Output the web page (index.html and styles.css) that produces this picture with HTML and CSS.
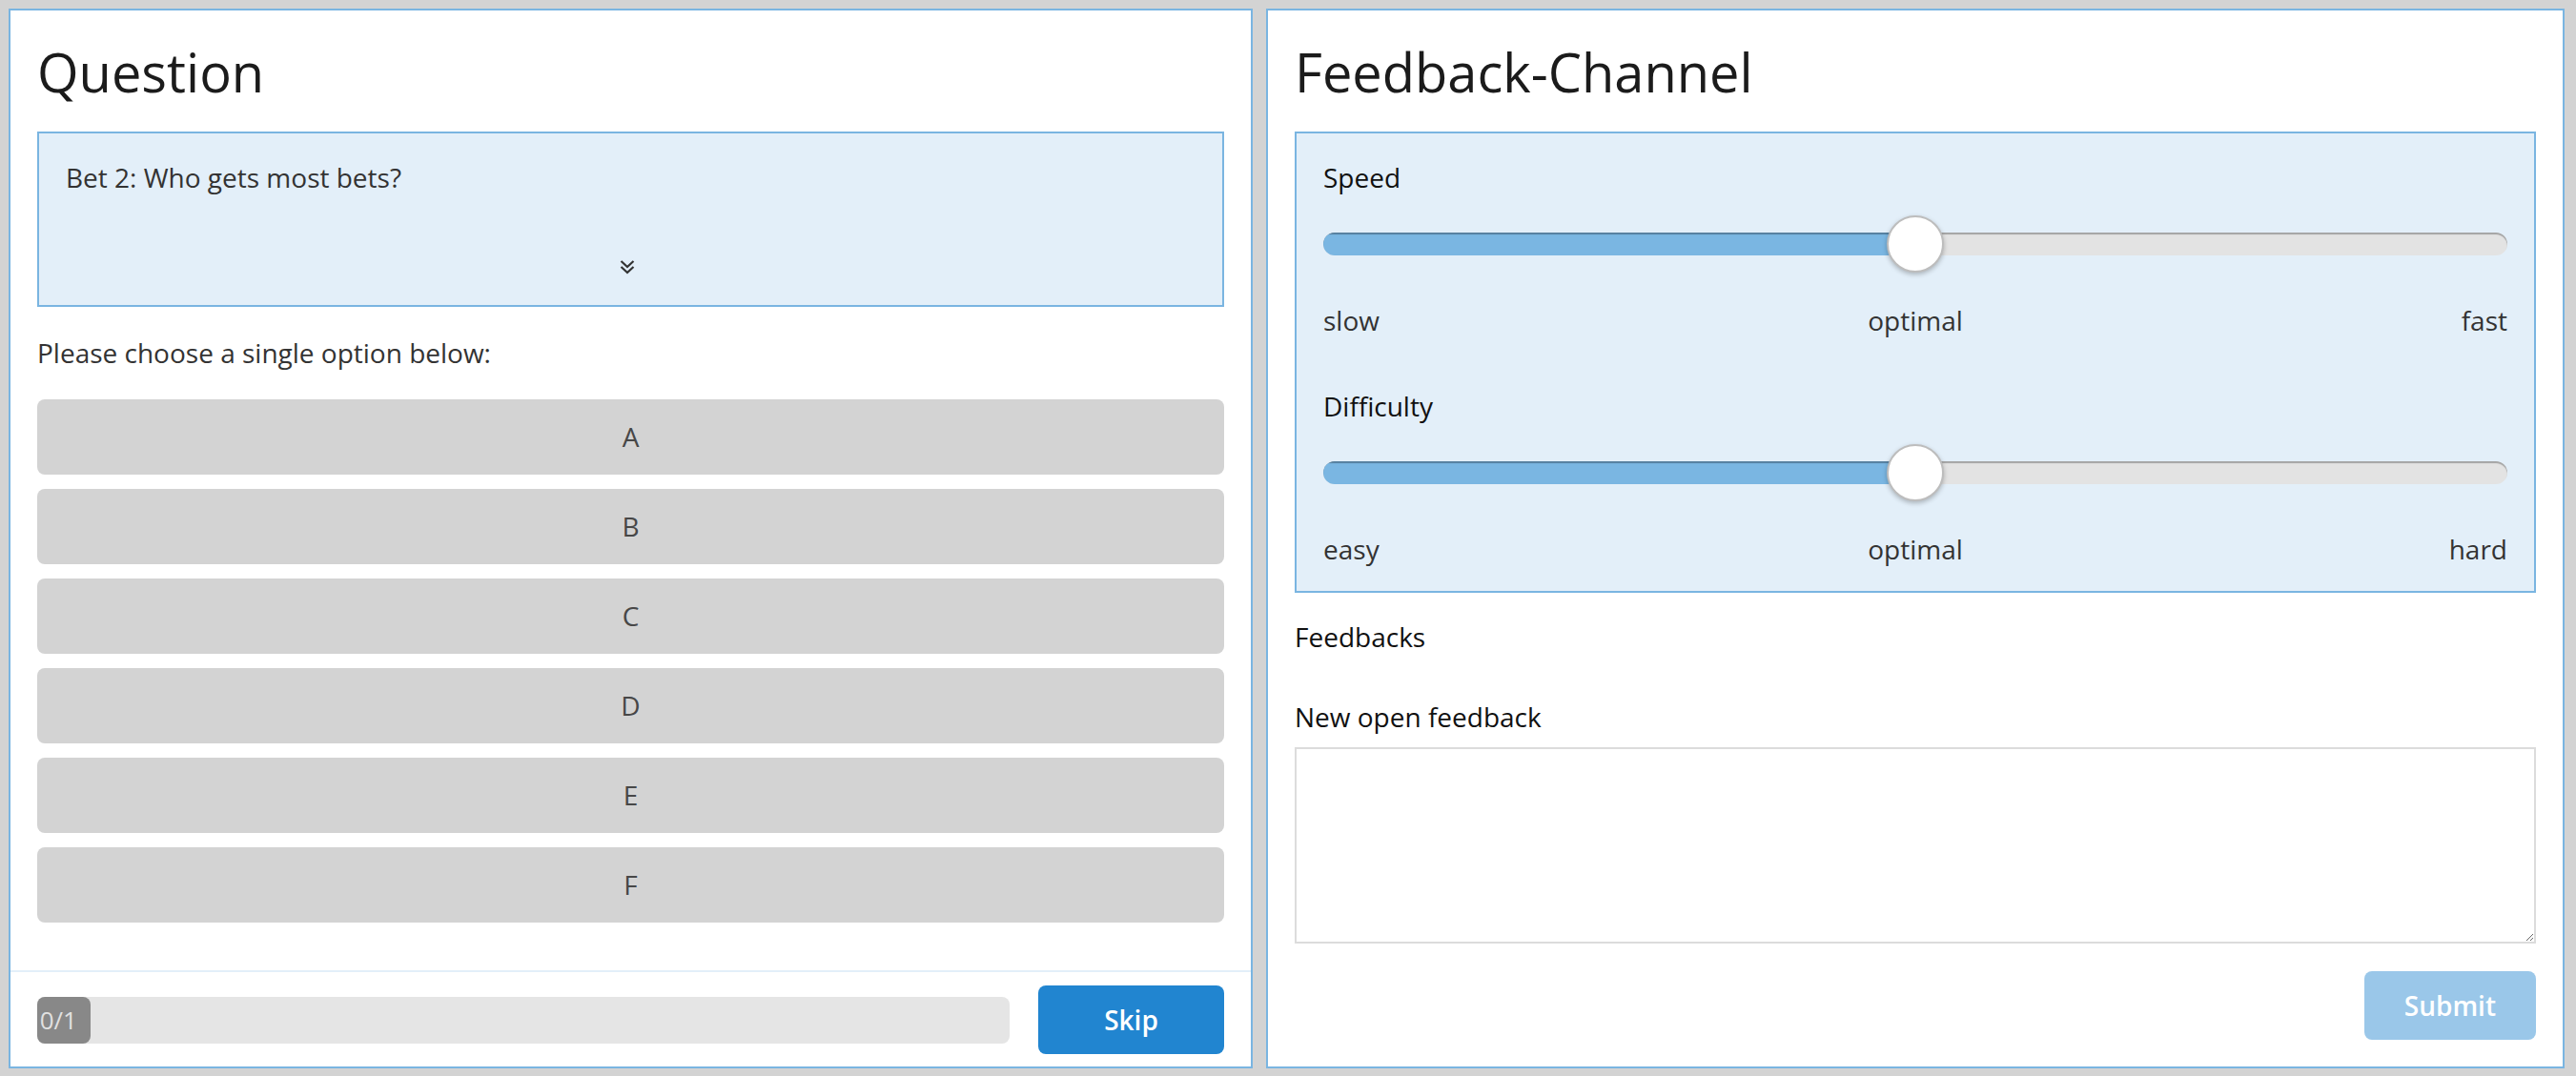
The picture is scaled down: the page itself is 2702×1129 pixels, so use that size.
FILE: index.html
```html
<!DOCTYPE html>
<html lang="en">
<head>
<meta charset="utf-8">
<title>Question / Feedback-Channel</title>
<link rel="stylesheet" href="styles.css">
</head>
<body>
<div class="page">
  <section class="panel">
    <div class="panel-content">
      <h1 class="title">Question</h1>
      <div class="qbox">
        <div class="qtext">Bet 2: Who gets most bets?</div>
        <div class="qmore">
          <svg class="chev" viewBox="0 0 16 16" width="16" height="16" aria-hidden="true">
            <polyline points="1.5,2 8,8 14.5,2" fill="none" stroke="#333" stroke-width="2.2"/>
            <polyline points="1.5,8 8,14 14.5,8" fill="none" stroke="#333" stroke-width="2.2"/>
          </svg>
        </div>
      </div>
      <p class="hint">Please choose a single option below:</p>
      <div class="options">
        <button class="opt">A</button>
        <button class="opt">B</button>
        <button class="opt">C</button>
        <button class="opt">D</button>
        <button class="opt">E</button>
        <button class="opt">F</button>
      </div>
    </div>
    <div class="panel-footer">
      <div class="progress">
        <div class="bar"><span class="bar-label">0/1</span></div>
      </div>
      <button class="btn primary skip">Skip</button>
    </div>
  </section>

  <section class="panel panel-right">
    <h1 class="title">Feedback-Channel</h1>
    <div class="fbox">
      <div class="field">
        <label class="flabel">Speed</label>
        <div class="slider">
          <div class="track"><div class="fill" style="width:50%"></div></div>
          <div class="thumb" style="left:calc(50% - 30px)"></div>
        </div>
        <div class="scale"><span>slow</span><span>optimal</span><span class="end">fast</span></div>
      </div>
      <div class="field">
        <label class="flabel">Difficulty</label>
        <div class="slider">
          <div class="track"><div class="fill" style="width:50%"></div></div>
          <div class="thumb" style="left:calc(50% - 30px)"></div>
        </div>
        <div class="scale"><span>easy</span><span>optimal</span><span class="end">hard</span></div>
      </div>
    </div>
    <div class="flabel feedbacks">Feedbacks</div>
    <label class="flabel newfb">New open feedback</label>
    <textarea class="fbtext"></textarea>
    <div class="actions"><button class="btn primary submit" disabled>Submit</button></div>
  </section>
</div>
</body>
</html>
```

FILE: styles.css
```css
html, body {
  height: 100%;
  margin: 0;
}
body {
  background: #d3d3d3;
  font-family: "Open Sans", "Liberation Sans", sans-serif;
  font-size: 28px;
  line-height: 40px;
  color: #333;
}
.page {
  height: 100%;
  box-sizing: border-box;
  padding: 9px 12px 8px 9px;
  display: grid;
  grid-template-columns: 1305px 1362px;
  column-gap: 14px;
}
.panel {
  background: #fff;
  border: 2px solid #7ab5e1;
  display: flex;
  flex-direction: column;
  min-height: 0;
}
.panel-content {
  flex: 1;
  padding: 28px;
}
.title {
  font-size: 56px;
  line-height: 72px;
  font-weight: 400;
  color: #1b1b1b;
  margin: 0 0 27px;
}
.qbox {
  background: #e3eff9;
  border: 2px solid #7ab5e1;
  padding: 28px;
}
.qtext {
  font-size: 28px;
  line-height: 36px;
  color: #333;
}
.qmore {
  margin-top: 64px;
  height: 24px;
  display: flex;
  justify-content: center;
  align-items: center;
}
.chev {
  display: block;
  margin-right: 7px;
}
.hint {
  margin: 28px 0 0;
  color: #333;
}
.options {
  margin-top: 29px;
  display: flex;
  flex-direction: column;
  gap: 15px;
}
.opt {
  font-family: inherit;
  font-size: 28px;
  line-height: 29px;
  padding: 25px 0;
  border: 0;
  border-radius: 8px;
  background: #d3d3d3;
  color: #474747;
  text-align: center;
}
.panel-footer {
  border-top: 2px solid #e3eff9;
  padding: 14px 28px 13px;
  display: flex;
  align-items: center;
  gap: 30px;
}
.progress {
  flex: 1;
  height: 49px;
  background: #e5e5e5;
  border-radius: 8px;
  display: flex;
}
.bar {
  width: 56px;
  background: #888;
  border-radius: 8px;
  position: relative;
}
.bar-label {
  position: absolute;
  right: 14px;
  top: 0;
  line-height: 49px;
  font-size: 26px;
  color: rgba(255, 255, 255, 0.75);
}
.btn {
  font-family: inherit;
  font-size: 28px;
  font-weight: 600;
  line-height: 28px;
  padding: 22px 42px;
  border: 0;
  border-radius: 8px;
  color: #fff;
}
.primary {
  background: #2185d0;
}
.skip {
  width: 195px;
  padding-left: 0;
  padding-right: 0;
}
.panel-right {
  padding: 28px;
}
.fbox {
  background: #e3eff9;
  border: 2px solid #7ab5e1;
  padding: 28px 28px 25px;
}
.field + .field {
  margin-top: 53px;
}
.flabel {
  display: block;
  font-size: 28px;
  line-height: 37px;
  font-weight: 500;
  color: #111;
}
.slider {
  margin-top: 21px;
  height: 60px;
  position: relative;
  display: flex;
  align-items: center;
}
.track {
  flex: 1;
  height: 24px;
  border-radius: 12px;
  background: #e3e3e3;
  box-shadow: inset 0 2px 1px rgba(0, 0, 0, 0.28);
  display: flex;
  overflow: hidden;
}
.fill {
  background: #7ab6e2;
  box-shadow: inset 0 2px 1px rgba(0, 0, 0, 0.3);
}
.thumb {
  position: absolute;
  top: 0;
  width: 60px;
  height: 60px;
  box-sizing: border-box;
  border-radius: 50%;
  background: #fff;
  border: 2px solid #bdbdbd;
  box-shadow: 0 2px 5px rgba(0, 0, 0, 0.25);
}
.scale {
  margin-top: 32px;
  display: grid;
  grid-template-columns: 1fr auto 1fr;
  font-size: 28px;
  line-height: 37px;
  color: #333;
}
.scale .end {
  justify-self: end;
}
.feedbacks {
  margin-top: 28px;
}
.newfb {
  margin-top: 47px;
}
.fbtext {
  display: block;
  margin-top: 13px;
  width: 100%;
  height: 207px;
  box-sizing: border-box;
  border: 2px solid #dcdcdc;
  border-radius: 0;
  background: #fff;
  font-family: inherit;
  font-size: 28px;
  padding: 22px 28px;
}
.actions {
  margin-top: 29px;
  display: flex;
  justify-content: flex-end;
}
.submit {
  opacity: 0.45;
}
```
